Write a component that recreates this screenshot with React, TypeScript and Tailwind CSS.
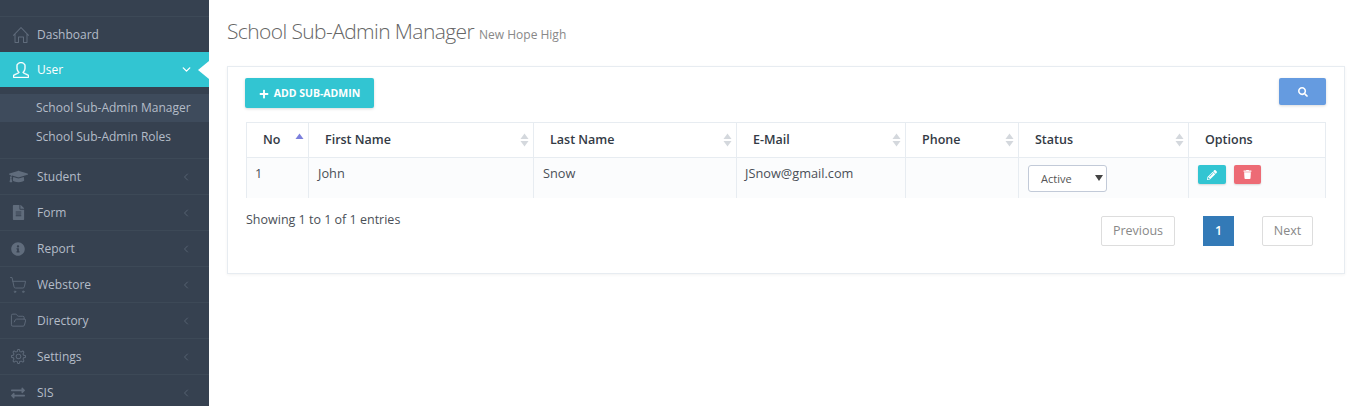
import type { ReactNode } from "react";
import { FaFileAlt, FaGraduationCap, FaInfoCircle, FaPencilAlt, FaPlus, FaSearch, FaTrash, FaExchangeAlt } from "react-icons/fa";
import { SlHome, SlUser, SlSettings } from "react-icons/sl";
import { ChevronDown, ChevronLeft, FolderOpen, ShoppingCart } from "lucide-react";

const menuBottom = [
  { label: "Student", icon: <FaGraduationCap size={19} /> },
  { label: "Form", icon: <FaFileAlt size={15} /> },
  { label: "Report", icon: <FaInfoCircle size={14} /> },
  { label: "Webstore", icon: <ShoppingCart size={18} strokeWidth={1.2} /> },
  { label: "Directory", icon: <FolderOpen size={17} strokeWidth={1.3} /> },
  { label: "Settings", icon: <SlSettings size={15} /> },
  { label: "SIS", icon: <FaExchangeAlt size={14} /> },
];

function SortIcon({ active }: { active?: boolean }) {
  return (
    <svg width="9" height="14" viewBox="0 0 9 14" className="shrink-0">
      <path d="M4.5 0.5 L8.5 6 L0.5 6 Z" fill={active ? "#7b7fdc" : "#d4d8dd"} />
      {!active && <path d="M4.5 13.5 L8.5 8 L0.5 8 Z" fill="#d4d8dd" />}
    </svg>
  );
}

function HeadCell({ children, sort, active }: { children: ReactNode; sort?: boolean; active?: boolean }) {
  return (
    <th className="border border-[#e7ecf1] p-0 text-left text-[12.5px] font-semibold text-[#333a45]">
      <div className="flex h-[34px] items-center justify-between pl-4 pr-[4px]">
        <span>{children}</span>
        {sort && <SortIcon active={active} />}
      </div>
    </th>
  );
}

export default function App() {
  return (
    <div className="flex min-h-[406px] bg-white font-['Open_Sans',sans-serif]">
      <aside className="w-[209px] shrink-0 bg-[#364150] pt-4 text-[12px] text-[#b4bcc8]">
        <div className="flex h-9 items-center border-t border-[#3d4957]">
          <span className="flex w-[37px] justify-center pl-[4px] text-[#606c7c]"><SlHome size={16} /></span>
          <span>Dashboard</span>
        </div>
        <div className="relative flex h-[35px] items-center bg-[#32c5d2] text-white">
          <span className="flex w-[37px] justify-center pl-[4px]"><SlUser size={16} stroke="currentColor" strokeWidth={24} /></span>
          <span>User</span>
          <ChevronDown size={13} strokeWidth={2.5} className="ml-auto mr-[16px]" />
          <span className="absolute right-0 top-[9px] h-0 w-0 border-y-[9px] border-r-[11px] border-y-transparent border-r-white" />
        </div>
        <div className="py-[7px]">
          <div className="flex h-7 items-center bg-[#3e4b5c] pl-9">School Sub-Admin Manager</div>
          <div className="flex h-[29px] items-center pl-9">School Sub-Admin Roles</div>
        </div>
        {menuBottom.map((item) => (
          <div key={item.label} className="flex h-9 items-center border-t border-[#3d4957]">
            <span className="flex w-[37px] justify-center pr-[1px] text-[#606c7c]">{item.icon}</span>
            <span>{item.label}</span>
            <ChevronLeft size={12} strokeWidth={1.5} className="ml-auto mr-[17px] text-[#606c7c]" />
          </div>
        ))}
      </aside>
      <main className="min-w-0 flex-1 pl-[18px] pr-[14px]">
        <div className="flex h-[66px] items-baseline pt-[16px]">
          <h1 className="text-[21px] font-light tracking-[-0.6px] text-[#666]">School Sub-Admin Manager</h1>
          <span className="ml-[5px] text-[12px] text-[#888]">New Hope High</span>
        </div>
        <div className="h-[208px] border border-[#e7ecf1] px-[17px] pt-[11px] shadow-[0_1px_3px_rgba(0,0,0,0.05)]">
          <div className="mr-px flex items-start justify-between">
            <button className="flex h-[30px] w-[129px] items-center justify-center gap-[5px] rounded-[2px] bg-[#32c5d2] pt-px text-[10.5px] font-bold text-white shadow-[0_1px_3px_rgba(0,0,0,0.15)]">
              <FaPlus size={10} />
              ADD SUB-ADMIN
            </button>
            <button className="flex h-[27px] w-[47px] items-center justify-center rounded-[2px] bg-[#659be0] text-white shadow-[0_1px_3px_rgba(0,0,0,0.15)]">
              <FaSearch size={10} />
            </button>
          </div>
          <table className="ml-px mt-[14px] w-[1079px] table-fixed border-collapse text-[12.75px] text-[#4a4f57]">
            <colgroup>
              <col className="w-[62px]" />
              <col className="w-[225px]" />
              <col className="w-[203px]" />
              <col className="w-[169px]" />
              <col className="w-[113px]" />
              <col className="w-[170px]" />
              <col className="w-[137px]" />
            </colgroup>
            <thead>
              <tr>
                <HeadCell sort active>No</HeadCell>
                <HeadCell sort>First Name</HeadCell>
                <HeadCell sort>Last Name</HeadCell>
                <HeadCell sort>E-Mail</HeadCell>
                <HeadCell sort>Phone</HeadCell>
                <HeadCell sort>Status</HeadCell>
                <HeadCell>Options</HeadCell>
              </tr>
            </thead>
            <tbody>
              <tr className="h-[40px] bg-[#fbfcfd] align-top">
                <td className="border-x border-[#e7ecf1] pl-2 pt-[6px]">1</td>
                <td className="border-x border-[#e7ecf1] pl-[9px] pt-[6px]">John</td>
                <td className="border-x border-[#e7ecf1] pl-[9px] pt-[6px]">Snow</td>
                <td className="border-x border-[#e7ecf1] pl-2 pt-[6px]">JSnow@gmail.com</td>
                <td className="border-x border-[#e7ecf1]"></td>
                <td className="border-x border-[#e7ecf1] pl-[9px] pt-[7px]">
                  <div className="relative flex h-[27px] w-[79px] items-center rounded-[3px] border border-[#c2cad8] bg-white pl-3 pt-px text-[11px] text-[#555]">
                    Active
                    <svg width="8" height="6" viewBox="0 0 8 6" className="absolute right-[3px] top-[9px]">
                      <path d="M0 0 H8 L4 6 Z" fill="#444" />
                    </svg>
                  </div>
                </td>
                <td className="border-x border-[#e7ecf1] pl-[9px] pt-[7px]">
                  <div className="flex gap-2">
                    <button className="flex h-[19px] w-[28px] items-center justify-center rounded-[2px] bg-[#32c5d2] text-white shadow-[0_1px_2px_rgba(0,0,0,0.15)]">
                      <FaPencilAlt size={10} />
                    </button>
                    <button className="flex h-[19px] w-[27px] items-center justify-center rounded-[2px] bg-[#ed6b75] text-white shadow-[0_1px_2px_rgba(0,0,0,0.15)]">
                      <FaTrash size={9} />
                    </button>
                  </div>
                </td>
              </tr>
            </tbody>
          </table>
          <div className="ml-px flex items-start justify-between">
            <div className="pt-[13px] text-[12.5px] text-[#4a4f57]">Showing 1 to 1 of 1 entries</div>
            <div className="mr-[14px] mt-[18px] flex gap-[28px] text-[12.5px]">
              <span className="flex h-[30px] w-[74px] items-center justify-center rounded-[2px] border border-[#ddd] pt-px text-[#888]">Previous</span>
              <span className="flex h-[30px] w-[31px] items-center justify-center bg-[#337ab7] pt-px font-semibold text-white">1</span>
              <span className="flex h-[30px] w-[51px] items-center justify-center rounded-[2px] border border-[#ddd] pt-px text-[#888]">Next</span>
            </div>
          </div>
        </div>
      </main>
    </div>
  );
}
